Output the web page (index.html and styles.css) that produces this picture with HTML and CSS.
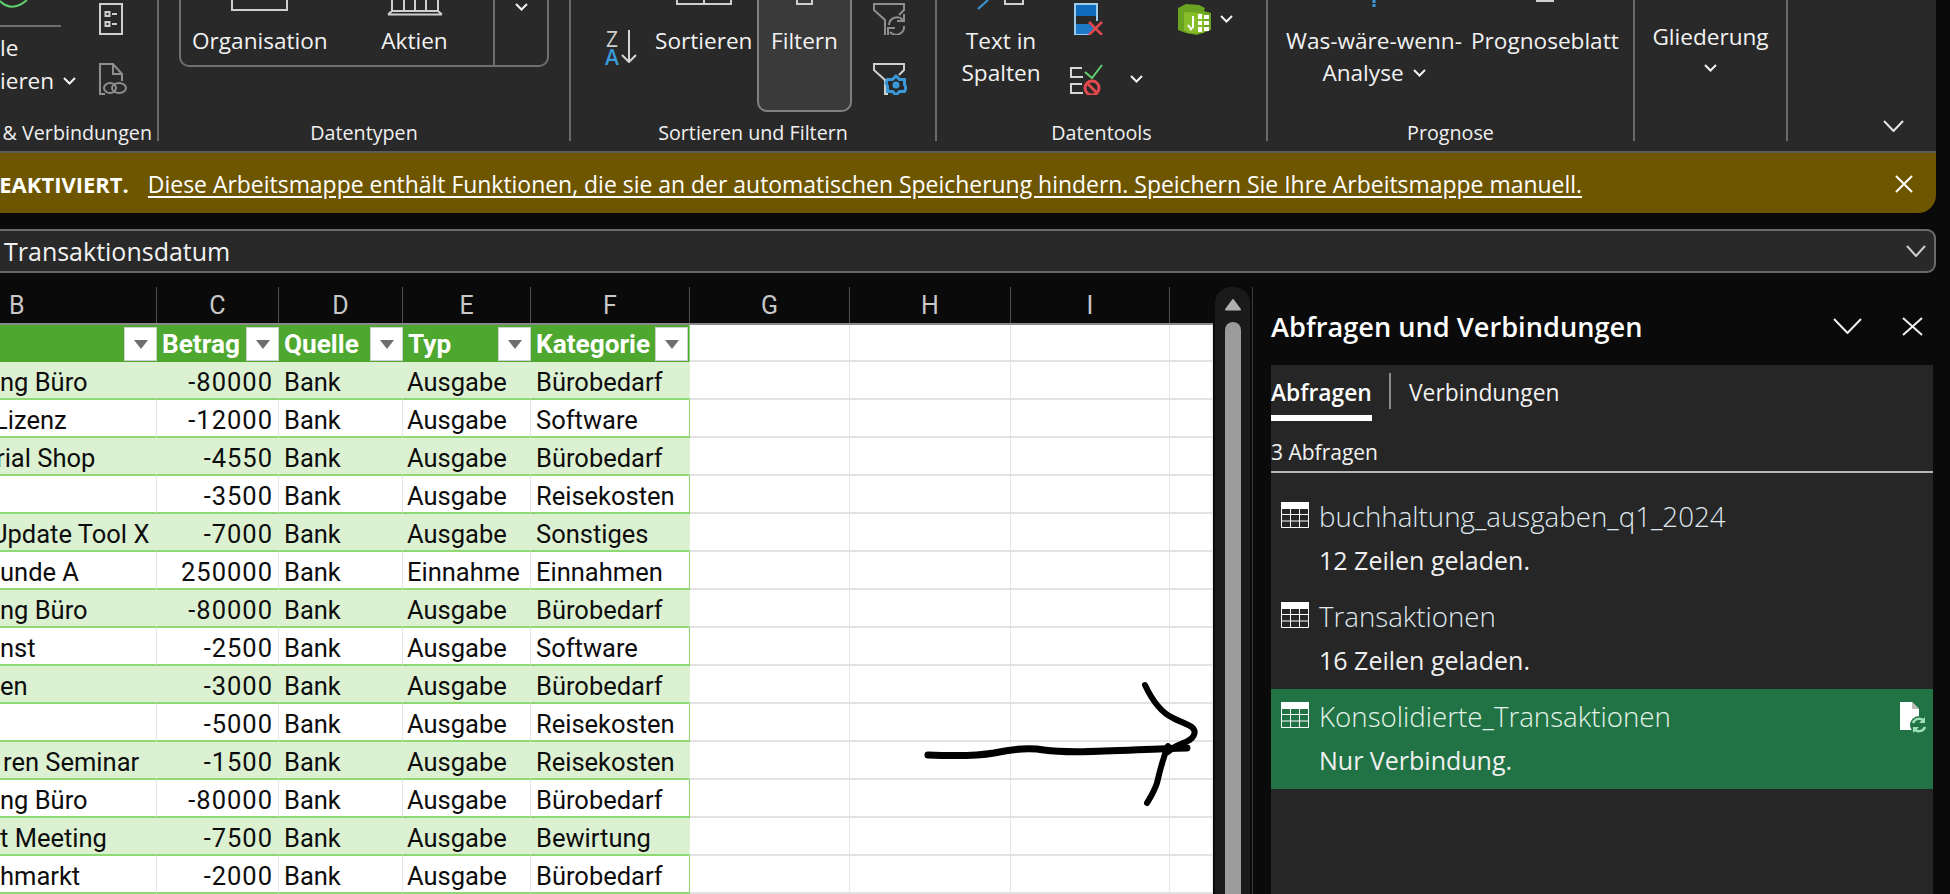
FILE: index.html
```html
<!DOCTYPE html>
<html lang="de">
<head>
<meta charset="utf-8">
<title>Abfragen und Verbindungen</title>
<link rel="stylesheet" href="styles.css">
</head>
<body>
<header class="ribbon">
  <section class="group g1">
    <div class="body">
      <div class="g1-text">
        <svg class="arc" width="30" height="8" viewBox="0 0 30 8"><path d="M0 1Q12 13 27 0" fill="none" stroke="#5fd06e" stroke-width="2"/></svg>
        <div class="g1-bar"></div>
        <div class="line g1-le">le</div>
        <div class="line g1-ieren">ieren<svg class="chev" width="13" height="8" viewBox="0 0 13 8"><path d="M1 1l5.500 5.500L12 1"/></svg></div>
      </div>
      <div class="stack">
        <svg width="30" height="32" viewBox="0 0 30 32"><g fill="none" stroke="#cfcfcf" stroke-width="2"><rect x="1" y="1" width="22" height="30"/><rect x="6.500" y="9" width="4" height="4"/><rect x="6.500" y="19" width="4" height="4"/></g><path d="M13 11h5M13 21h5" stroke="#cfcfcf" stroke-width="2"/></svg>
        <svg width="30" height="32" viewBox="0 0 30 32"><g fill="none" stroke="#8e8e8e" stroke-width="2"><path d="M6 31H1V1h13l9 10v7"/><path d="M14 1v10h9"/><ellipse cx="11" cy="25" rx="6" ry="5"/><ellipse cx="20" cy="25" rx="7" ry="5"/></g></svg>
      </div>
    </div>
    <div class="label label-right">&amp; Verbindungen</div>
  </section>
  <div class="sep"></div>

  <section class="group g2">
    <div class="body">
      <div class="types">
        <div class="tool t-org">
          <svg class="cut" width="57" height="12" viewBox="0 0 57 12"><path d="M1 0v10h55V0" fill="none" stroke="#cfcfcf" stroke-width="2"/></svg>
          <div class="line">Organisation</div>
        </div>
        <div class="tool t-akt">
          <svg class="cut" width="56" height="16" viewBox="0 0 56 16"><path d="M5 0v11M17 0v11M28 0v11M39 0v11M51 0v11M1 14.500h54M5 11h46M1 14.500l4-3.500M55 14.500l-4-3.500" fill="none" stroke="#cfcfcf" stroke-width="2"/></svg>
          <div class="line">Aktien</div>
        </div>
        <div class="more"><svg class="chev" width="13" height="8" viewBox="0 0 13 8"><path d="M1 1l5.500 5.500L12 1"/></svg></div>
      </div>
    </div>
    <div class="label">Datentypen</div>
  </section>
  <div class="sep"></div>

  <section class="group g3">
    <div class="body">
      <div class="sort-az">
        <div class="az"><span class="z">Z</span><span class="a">A</span></div>
        <svg width="16" height="33" viewBox="0 0 16 33"><path d="M8 0v32M1 25l7 7 7-7" fill="none" stroke="#d6d6d6" stroke-width="2"/></svg>
      </div>
      <div class="tool t-sort">
        <svg class="cut" width="56" height="6" viewBox="0 0 56 6"><path d="M1 0v4h54V0M28 0v4" fill="none" stroke="#cfcfcf" stroke-width="2"/></svg>
        <div class="line">Sortieren</div>
      </div>
      <div class="tool t-filter">
        <svg class="cut" width="17" height="6" viewBox="0 0 17 6"><path d="M1 0v4h15V0" fill="none" stroke="#cfcfcf" stroke-width="2"/></svg>
        <div class="line">Filtern</div>
      </div>
      <div class="stack s-funnel">
        <svg width="34" height="32" viewBox="0 0 34 32"><path d="M12 32V17L1 7V1h30v6l-5 5" fill="none" stroke="#8e8e8e" stroke-width="2"/><path d="M16 22a8 8 0 0 1 14-5M31 23a8 8 0 0 1-14 6" fill="none" stroke="#8e8e8e" stroke-width="2"/><path d="M31 11v7h-7M15 32v-7h7" fill="none" stroke="#8e8e8e" stroke-width="2"/></svg>
        <svg width="34" height="32" viewBox="0 0 34 32"><path d="M15 31h-3V17L1 7V1h30v6l-5 5" fill="none" stroke="#cfcfcf" stroke-width="2"/><path d="M23 13l3.500 3.500h5v5L33 25l-1.500 3.500h-5L23 32l-3.500-3.500h-5v-5L13 20l1.500-3.500h5z" fill="none" stroke="#3a9ad9" stroke-width="3"/><circle cx="23" cy="22" r="3.500" fill="#3a9ad9"/></svg>
      </div>
    </div>
    <div class="label">Sortieren und Filtern</div>
  </section>
  <div class="sep"></div>

  <section class="group g4">
    <div class="body">
      <div class="tool t-text">
        <svg class="cut" width="48" height="10" viewBox="0 0 48 10"><path d="M11 0L1 9" fill="none" stroke="#3a9ad9" stroke-width="2"/><path d="M28 0v4h18V0" fill="none" stroke="#cfcfcf" stroke-width="2"/></svg>
        <div class="line">Text in</div>
        <div class="line">Spalten</div>
      </div>
      <div class="stack s-tools">
        <svg class="rm-dup" width="30" height="32" viewBox="0 0 30 32"><path d="M1 16V1h22v15M1 16v15h14M23 13v5" fill="none" stroke="#9ccbec" stroke-width="2"/><rect x="2" y="2" width="20" height="11" fill="#0f6cbd"/><path d="M2 21h13l6 5-6 5H2z" fill="#1e78c8"/><path d="M15 19l13 13M28 19L15 32" stroke="#e3484d" stroke-width="2.500"/></svg>
        <div class="row">
          <svg width="33" height="32" viewBox="0 0 33 32"><path d="M12 5H1v9h12M12 21H1v9h12" fill="none" stroke="#d6d6d6" stroke-width="2"/><path d="M15 9l7 6L32 2" fill="none" stroke="#5fd06e" stroke-width="2"/><circle cx="22" cy="25" r="7" fill="none" stroke="#e3484d" stroke-width="3"/><path d="M17 20l10 10" stroke="#e3484d" stroke-width="3"/></svg>
          <svg class="chev chev-val" width="13" height="8" viewBox="0 0 13 8"><path d="M1 1l5.500 5.500L12 1"/></svg>
        </div>
      </div>
      <div class="row r-pivot">
        <svg width="33" height="32" viewBox="0 0 33 32"><path d="M0 5L8 1l13 1 6 3-1 3 7 2v17l-14 5-11-2-8-3z" fill="#6aa321"/><path d="M6 9l20 1v20H11l-5-3z" fill="#88bd2a"/><path d="M20 11h4v5h-4zM26 12h5v4h-5zM20 18h4v4h-4zM26 18h5v4h-5zM20 24h4v5h-4zM26 24h5v4h-5z" fill="#fff"/><path d="M15 13v11l-3 3M10 22l2 3" fill="none" stroke="#fff" stroke-width="2"/></svg>
        <svg class="chev chev-piv" width="13" height="8" viewBox="0 0 13 8"><path d="M1 1l5.500 5.500L12 1"/></svg>
      </div>
    </div>
    <div class="label">Datentools</div>
  </section>
  <div class="sep"></div>

  <section class="group g5">
    <div class="body">
      <div class="tool t-was">
        <svg class="cut" width="6" height="10" viewBox="0 0 6 10"><path d="M3 0v8" fill="none" stroke="#3a9ad9" stroke-width="3" stroke-dasharray="3 1"/></svg>
        <div class="line">Was-wäre-wenn-</div>
        <div class="line">Analyse<svg class="chev" width="13" height="8" viewBox="0 0 13 8"><path d="M1 1l5.500 5.500L12 1"/></svg></div>
      </div>
      <div class="tool t-prog">
        <svg class="cut" width="18" height="2" viewBox="0 0 18 2"><path d="M0 1h18" stroke="#cfcfcf" stroke-width="2"/></svg>
        <div class="line">Prognoseblatt</div>
      </div>
    </div>
    <div class="label">Prognose</div>
  </section>
  <div class="sep"></div>

  <section class="group g6">
    <div class="outline">
      <div class="line">Gliederung</div>
      <svg class="chev" width="13" height="8" viewBox="0 0 13 8"><path d="M1 1l5.500 5.500L12 1"/></svg>
    </div>
  </section>
  <div class="sep"></div>

  <section class="group g7">
    <svg class="collapse" width="21" height="12" viewBox="0 0 21 12"><path d="M1 1l9.500 10L20 1" fill="none" stroke="#e6e6e6" stroke-width="2"/></svg>
  </section>
</header>

<div class="banner">
  <strong class="banner-title">DEAKTIVIERT.</strong>
  <a class="banner-link">Diese Arbeitsmappe enthält Funktionen, die sie an der automatischen Speicherung hindern. Speichern Sie Ihre Arbeitsmappe manuell.</a>
  <svg class="banner-x" width="18" height="18" viewBox="0 0 18 18"><path d="M1 1l16 16M17 1L1 17" stroke="#fff" stroke-width="2"/></svg>
</div>

<div class="formula">
  <span class="formula-text">Transaktionsdatum</span>
  <svg width="20" height="12" viewBox="0 0 20 12"><path d="M1 1l9 10 9-10" fill="none" stroke="#cfcfcf" stroke-width="2"/></svg>
</div>

<main class="main">
  <div class="sheet">
    <div class="col-heads">
      <div class="ch ch-b">B</div><div class="ch ch-c">C</div><div class="ch ch-d">D</div><div class="ch ch-e">E</div><div class="ch ch-f">F</div><div class="ch ch-g">G</div><div class="ch ch-h">H</div><div class="ch ch-i">I</div><div class="ch ch-j"></div>
    </div>
    <table class="grid">
      <colgroup><col class="w-b"><col class="w-c"><col class="w-d"><col class="w-e"><col class="w-f"><col class="w-g"><col class="w-h"><col class="w-i"><col class="w-j"></colgroup>
      <thead>
        <tr>
          <th><div class="th"><span></span><i class="fb"></i></div></th>
          <th><div class="th"><span>Betrag</span><i class="fb"></i></div></th>
          <th><div class="th"><span>Quelle</span><i class="fb"></i></div></th>
          <th><div class="th"><span>Typ</span><i class="fb"></i></div></th>
          <th class="last"><div class="th"><span>Kategorie</span><i class="fb"></i></div></th>
          <td></td><td></td><td></td><td></td>
        </tr>
      </thead>
      <tbody>
        <tr class="band"><td class="clip">ng Büro</td><td class="num">-80000</td><td class="t">Bank</td><td class="t">Ausgabe</td><td class="t last">Bürobedarf</td><td></td><td></td><td></td><td></td></tr>
        <tr><td class="clip clip-l">Lizenz</td><td class="num">-12000</td><td class="t">Bank</td><td class="t">Ausgabe</td><td class="t last">Software</td><td></td><td></td><td></td><td></td></tr>
        <tr class="band"><td class="clip clip-r">rial Shop</td><td class="num">-4550</td><td class="t">Bank</td><td class="t">Ausgabe</td><td class="t last">Bürobedarf</td><td></td><td></td><td></td><td></td></tr>
        <tr><td class="clip"></td><td class="num">-3500</td><td class="t">Bank</td><td class="t">Ausgabe</td><td class="t last">Reisekosten</td><td></td><td></td><td></td><td></td></tr>
        <tr class="band"><td class="clip clip-u">Update Tool X</td><td class="num">-7000</td><td class="t">Bank</td><td class="t">Ausgabe</td><td class="t last">Sonstiges</td><td></td><td></td><td></td><td></td></tr>
        <tr><td class="clip">unde A</td><td class="num">250000</td><td class="t">Bank</td><td class="t">Einnahme</td><td class="t last">Einnahmen</td><td></td><td></td><td></td><td></td></tr>
        <tr class="band"><td class="clip">ng Büro</td><td class="num">-80000</td><td class="t">Bank</td><td class="t">Ausgabe</td><td class="t last">Bürobedarf</td><td></td><td></td><td></td><td></td></tr>
        <tr><td class="clip">nst</td><td class="num">-2500</td><td class="t">Bank</td><td class="t">Ausgabe</td><td class="t last">Software</td><td></td><td></td><td></td><td></td></tr>
        <tr class="band"><td class="clip">en</td><td class="num">-3000</td><td class="t">Bank</td><td class="t">Ausgabe</td><td class="t last">Bürobedarf</td><td></td><td></td><td></td><td></td></tr>
        <tr><td class="clip"></td><td class="num">-5000</td><td class="t">Bank</td><td class="t">Ausgabe</td><td class="t last">Reisekosten</td><td></td><td></td><td></td><td></td></tr>
        <tr class="band"><td class="clip clip-s">ren Seminar</td><td class="num">-1500</td><td class="t">Bank</td><td class="t">Ausgabe</td><td class="t last">Reisekosten</td><td></td><td></td><td></td><td></td></tr>
        <tr><td class="clip">ng Büro</td><td class="num">-80000</td><td class="t">Bank</td><td class="t">Ausgabe</td><td class="t last">Bürobedarf</td><td></td><td></td><td></td><td></td></tr>
        <tr class="band"><td class="clip">t Meeting</td><td class="num">-7500</td><td class="t">Bank</td><td class="t">Ausgabe</td><td class="t last">Bewirtung</td><td></td><td></td><td></td><td></td></tr>
        <tr><td class="clip">hmarkt</td><td class="num">-2000</td><td class="t">Bank</td><td class="t">Ausgabe</td><td class="t last">Bürobedarf</td><td></td><td></td><td></td><td></td></tr>
      </tbody>
    </table>
  </div>

  <div class="scrollbar">
    <div class="track">
      <svg width="18" height="13" viewBox="0 0 18 13"><path d="M9 2l7 9.500H2z" fill="#b0b0b0" stroke="#b0b0b0" stroke-width="2" stroke-linejoin="round"/></svg>
      <div class="thumb"></div>
    </div>
  </div>

  <aside class="pane">
    <div class="pane-head">
      <h2 class="pane-title">Abfragen und Verbindungen</h2>
      <svg class="pane-chev" width="29" height="16" viewBox="0 0 29 16"><path d="M1 1l13.500 14L28 1" fill="none" stroke="#f0f0f0" stroke-width="2"/></svg>
      <svg class="pane-x" width="21" height="19" viewBox="0 0 21 19"><path d="M1 1l19 17M20 1L1 18" fill="none" stroke="#f0f0f0" stroke-width="2"/></svg>
    </div>
    <div class="pane-body">
      <div class="tabs">
        <div class="tab active">Abfragen</div>
        <div class="tab-sep"></div>
        <div class="tab">Verbindungen</div>
      </div>
      <div class="count">3 Abfragen</div>
      <ul class="list">
        <li class="item">
          <svg class="tbl" width="28" height="26" viewBox="0 0 28 26"><rect width="28" height="7" fill="#fff"/><path d="M.5 7v18.500h27V7M0 12.500h28M0 19h28M9.500 7v19M18.500 7v19" fill="none" stroke="#fff"/></svg>
          <div><div class="name">buchhaltung_ausgaben_q1_2024</div><div class="sub">12 Zeilen geladen.</div></div>
        </li>
        <li class="item">
          <svg class="tbl" width="28" height="26" viewBox="0 0 28 26"><rect width="28" height="7" fill="#fff"/><path d="M.5 7v18.500h27V7M0 12.500h28M0 19h28M9.500 7v19M18.500 7v19" fill="none" stroke="#fff"/></svg>
          <div><div class="name">Transaktionen</div><div class="sub">16 Zeilen geladen.</div></div>
        </li>
        <li class="item selected">
          <svg class="tbl" width="28" height="26" viewBox="0 0 28 26"><rect width="28" height="7" fill="#fff"/><path d="M.5 7v18.500h27V7M0 12.500h28M0 19h28M9.500 7v19M18.500 7v19" fill="none" stroke="#fff"/></svg>
          <div><div class="name">Konsolidierte_Transaktionen</div><div class="sub">Nur Verbindung.</div></div>
          <svg class="status" width="30" height="32" viewBox="0 0 30 32"><path d="M1 1h12l7 7v21H1z" fill="#fff"/><path d="M13 1v7h7" fill="#bdbdbd"/><circle cx="20" cy="24" r="9" fill="#217346"/><path d="M14 22a6.500 6.500 0 0 1 11-2M26 26a6.500 6.500 0 0 1-11 2" fill="none" stroke="#9fe0b8" stroke-width="2.500"/><path d="M26 16v6h-6M14 32v-6h6" fill="#9fe0b8"/></svg>
        </li>
      </ul>
    </div>
  </aside>
</main>

<svg class="ink" width="300" height="130" viewBox="0 0 300 130">
  <path d="M6 75C30 76 55 76 72 73 90 69 105 67 122 70 150 74 200 70 265 68" fill="none" stroke="#000" stroke-width="7" stroke-linecap="round"/>
  <path d="M223 5C230 20 240 33 251 38 262 44 276 46 272 55 268 64 256 62 246 72" fill="none" stroke="#000" stroke-width="6" stroke-linecap="round" stroke-linejoin="round"/>
  <path d="M246 66C241 78 238 90 235 103 232 112 228 118 225 123" fill="none" stroke="#000" stroke-width="6" stroke-linecap="round"/>
</svg>
</body>
</html>
```

FILE: styles.css
```css
* { box-sizing: border-box; }
html, body { margin: 0; padding: 0; }
body {
  position: relative;
  width: 1950px;
  height: 894px;
  overflow: hidden;
  background: #0a0a0a;
  color: #f2f2f2;
  font-family: "Open Sans", "Noto Sans", sans-serif;
}

/* ribbon */
.ribbon {
  display: flex;
  width: 1936px;
  height: 153px;
  background: #292929;
  border-bottom: 2px solid #5c5c5c;
  font-size: 22.600px;
}
.group { display: flex; flex-direction: column; height: 151px; flex: none; overflow: hidden; }
.g1 { width: 157px; }
.g2 { width: 410px; }
.g3 { width: 364px; }
.g4 { width: 329px; }
.g5 { width: 365px; }
.g6 { width: 151px; }
.g7 { width: 148px; }
.sep { width: 2px; height: 141px; background: #6a6a6a; flex: none; }
.body { display: flex; height: 117px; align-items: flex-start; }
.label { height: 32px; line-height: 32px; font-size: 19.700px; text-align: center; color: #f0f0f0; }
.label-right { text-align: right; padding-right: 5px; }
.line { height: 32px; line-height: 32px; white-space: nowrap; }
.tool {
  display: grid;
  grid-template-rows: 25px auto auto;
  align-content: start;
  justify-items: center;
  flex: none;
}
.cut { display: block; align-self: start; }
.chev { fill: none; stroke: #f4f4f4; stroke-width: 2; }

.g1-text { width: 99px; flex: none; overflow: hidden; }
.arc { display: block; }
.g1-bar { width: 61px; height: 2px; margin-top: 17px; background: #6e6e6e; }
.g1-le { margin-top: 5px; }
.g1-ieren { margin-top: 1px; }
.g1-ieren .chev { margin-left: 9px; vertical-align: 4px; }
.stack { display: flex; flex-direction: column; gap: 28px; padding-top: 3px; flex: none; }
.stack svg { display: block; }
.row { display: flex; align-items: center; }

.types {
  display: flex;
  width: 370px;
  height: 67px;
  margin-left: 20px;
  border: 2px solid #6f6f6f;
  border-top: 0;
  border-radius: 0 0 10px 10px;
  padding-left: 11px;
}
.t-org { width: 135px; }
.t-akt { width: 67px; margin-left: 54px; }
.more { margin-left: auto; width: 54px; border-left: 2px solid #6f6f6f; display: flex; justify-content: center; padding-top: 3px; align-items: flex-start; }

.sort-az { display: flex; margin-left: 32px; margin-top: 30px; width: 36px; flex: none; }
.az { display: flex; flex-direction: column; width: 18px; font-size: 21px; line-height: 18px; align-items: center; flex: none; }
.z { color: #cfcfcf; }
.a { color: #3a9ad9; font-weight: 600; }
.t-sort { width: 96px; margin-left: 16px; }
.t-filter {
  width: 95px;
  height: 112px;
  margin-left: 6px;
  background: #3a3a3a;
  border: 2px solid #808080;
  border-top: 0;
  border-radius: 0 0 10px 10px;
}
.s-funnel { margin-left: 21px; }

.t-text { width: 80px; margin-left: 24px; }
.s-tools { margin-left: 29px; }
.rm-dup { margin-left: 4px; }
.chev-val { margin-left: 27px; }
.r-pivot { margin-left: 35px; padding-top: 3px; }
.chev-piv { margin-left: 9px; }

.t-was { width: 180px; margin-left: 16px; }
.t-was .chev { margin-left: 9px; vertical-align: 4px; }
.t-prog { width: 147px; margin-left: 7px; }

.outline { display: flex; flex-direction: column; align-items: center; padding-top: 21px; }
.outline .chev { margin-top: 11px; }

.g7 { align-items: flex-end; }
.collapse { margin-top: 120px; margin-right: 32px; }

/* banner */
.banner {
  display: flex;
  align-items: center;
  width: 1936px;
  height: 60px;
  padding-top: 1px;
  background: #6e5600;
  border-radius: 0 0 18px 0;
  color: #fff;
  font-size: 22px;
  overflow: hidden;
}
.banner-title { font-weight: 700; margin-left: -17px; flex: none; white-space: nowrap; }
.banner-link { margin-left: 19px; font-size: 22.940px; text-decoration: underline; text-underline-offset: 3px; white-space: nowrap; flex: none; }
.banner-x { margin-left: auto; margin-right: 23px; flex: none; }

/* formula bar */
.formula {
  display: flex;
  align-items: center;
  justify-content: space-between;
  width: 1936px;
  height: 44px;
  margin-top: 16px;
  padding: 0 8px 0 4px;
  background: #292929;
  border: 2px solid #6a6a6a;
  border-left: 0;
  border-radius: 0 9px 9px 0;
  font-size: 25px;
}

/* sheet */
.main { display: flex; height: 607px; margin-top: 14px; }
.sheet { width: 1213px; flex: none; overflow: hidden; }
.col-heads { display: flex; height: 38px; border-bottom: 2px solid #8a8a8a; }
.ch {
  flex: none;
  height: 36px;
  padding-top: 1px;
  line-height: 36px;
  text-align: center;
  border-right: 1px solid #4e4e4e;
  color: #c8c8c8;
  font-family: Roboto, "Liberation Sans", sans-serif;
  font-size: 25px;
}
.ch-b { width: 157px; text-align: left; padding-left: 9px; }
.ch-c { width: 122px; }
.ch-d { width: 124px; }
.ch-e { width: 128px; }
.ch-f { width: 159px; }
.ch-g { width: 160px; }
.ch-h { width: 161px; }
.ch-i { width: 159px; }
.ch-j { width: 43px; border-right: 0; }

.grid {
  table-layout: fixed;
  width: 1213px;
  border-collapse: separate;
  border-spacing: 0;
  background: #fff;
  color: #0d0d0d;
  font-family: Roboto, "Liberation Sans", sans-serif;
  font-size: 25.500px;
}
.w-b { width: 157px; }
.w-c { width: 122px; }
.w-d { width: 124px; }
.w-e { width: 128px; }
.w-f { width: 159px; }
.w-g { width: 160px; }
.w-h { width: 161px; }
.w-i { width: 159px; }
.w-j { width: 43px; }
.grid td, .grid th {
  height: 38px;
  padding: 4px 0 0;
  border-right: 1px solid #e6e6e6;
  border-bottom: 2px solid #e2e2e2;
  overflow: hidden;
  white-space: nowrap;
  font-weight: 400;
}
.grid thead td, .grid thead th { height: 37px; padding: 0; }
.grid thead th { background: #4ea72e; border: 0; font-size: 26.200px; }
.grid tbody .clip, .grid tbody .num, .grid tbody .t { border-bottom-color: #8ed973; }
.grid tbody .band .clip, .grid tbody .band .num, .grid tbody .band .t { background: #dcf1d1; border-right-color: #dcf1d1; }
.grid .last, .grid .band .last { border-right: 1px solid #8ed973; }
.clip { text-align: left; }
.clip-l { text-indent: -6px; }
.clip-r { text-indent: -4px; }
.clip-u { text-indent: -9px; }
.clip-s { text-indent: 3px; }
.num { text-align: right; letter-spacing: 1px; }
.grid .num { padding-right: 5px; }
.grid .t { padding-left: 5px; }
.grid .t:nth-child(4) { padding-left: 4px; }
.th { display: flex; align-items: center; justify-content: space-between; height: 37px; padding: 1px 0 0 5px; color: #fff; font-weight: 700; }
.grid thead .last .th { margin-right: 1px; }
.fb {
  position: relative;
  flex: none;
  width: 33px;
  height: 34px;
  background: #fff;
  border: 1px solid #cfcfcf;
}
.fb::after {
  content: "";
  position: absolute;
  left: 9px;
  top: 12px;
  border-left: 7px solid transparent;
  border-right: 7px solid transparent;
  border-top: 9px solid #6e6e6e;
}

/* scrollbar */
.scrollbar { width: 40px; flex: none; padding-left: 2px; border-right: 1px solid #3c3c3c; }
.track {
  display: flex;
  flex-direction: column;
  align-items: center;
  width: 35px;
  height: 607px;
  padding-top: 11px;
  background: #1a1a1a;
  border-radius: 16px 16px 0 0;
  gap: 11px;
}
.track svg { display: block; flex: none; }
.thumb { width: 16px; flex: 1; background: #9b9b9b; border-radius: 8px 8px 0 0; }

/* pane */
.pane { flex: none; width: 697px; }
.pane-head { display: flex; align-items: center; height: 78px; padding: 0 0 0 18px; }
.pane-title { margin: 1px 0 0; font-size: 27.200px; font-weight: 600; color: #fff; line-height: 78px; white-space: nowrap; }
.pane-chev { margin-left: auto; }
.pane-x { margin-left: 40px; margin-right: 27px; }
.pane-body {
  width: 662px;
  height: 529px;
  margin-left: 18px;
  background: #262626;
}
.tabs { display: flex; height: 56px; font-size: 22.800px; }
.tab { height: 56px; padding-top: 6px; line-height: 44px; }
.tab.active { width: 101px; font-weight: 600; border-bottom: 6px solid #fff; color: #fff; white-space: nowrap; }
.tab-sep { width: 2px; height: 36px; margin: 8px 18px 0 17px; background: #8c8c8c; }
.count { height: 52px; padding-top: 13px; line-height: 36px; font-size: 21px; border-bottom: 2px solid #b5b5b5; }
.list { list-style: none; margin: 0; padding: 16px 0 0; }
.item { display: flex; height: 100px; padding: 5px 0 0 10px; }
.item.selected { background: #217346; }
.tbl { flex: none; margin: 8px 10px 0 0; }
.name { height: 44px; line-height: 44px; font-size: 27.700px; font-weight: 300; color: #dfe8ee; white-space: nowrap; }
.sub { height: 45px; line-height: 45px; font-size: 25px; color: #f0f0f0; }
.selected .name { color: #e6f3ea; }
.status { margin: 7px 4px 0 auto; flex: none; }

/* hand-drawn annotation */
.ink { position: absolute; left: 922px; top: 680px; }
```
